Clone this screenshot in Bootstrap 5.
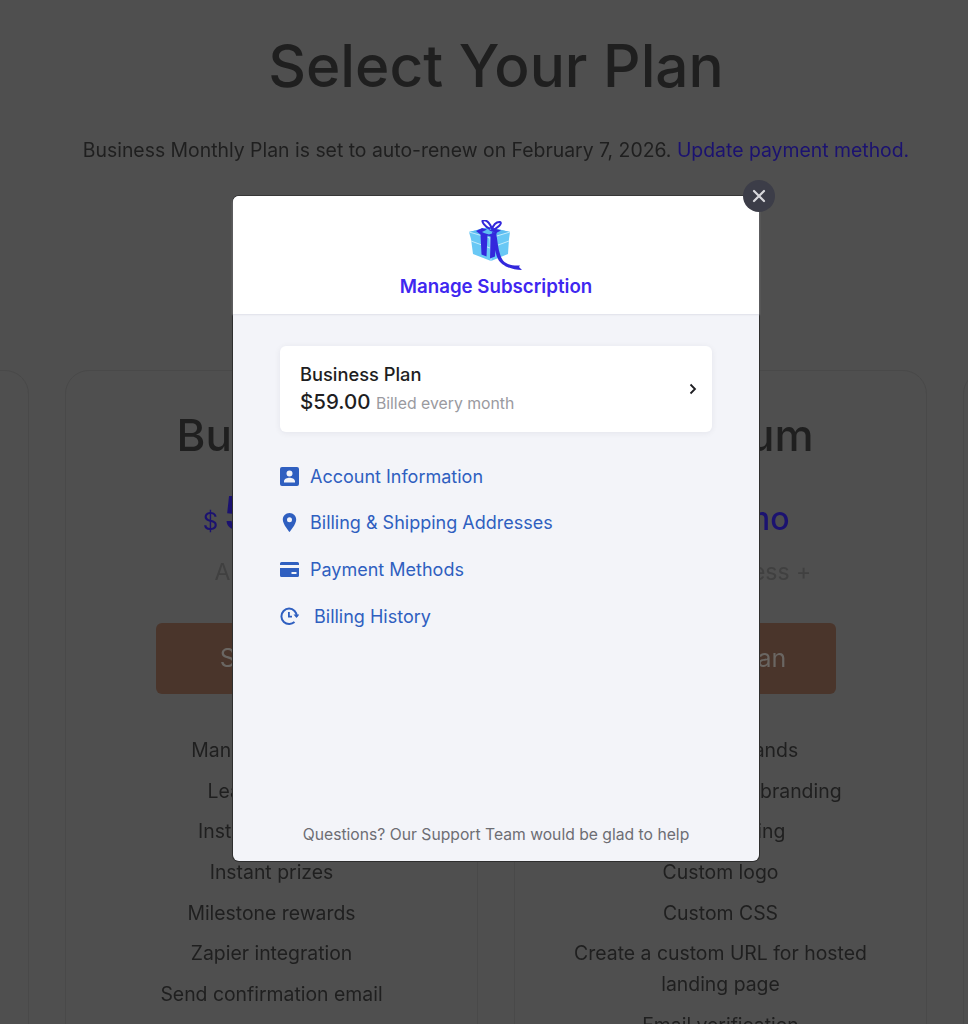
<!DOCTYPE html>
<html lang="en">
<head>
  <meta charset="UTF-8">
  <meta name="viewport" content="width=device-width, initial-scale=1.0">
  <title>Manage Subscription</title>
  <link href="https://cdn.jsdelivr.net/npm/bootstrap@5.3.0/dist/css/bootstrap.min.css" rel="stylesheet">
  <style>
    html, body { height: 100%; overflow: hidden; }
    body { background: #4f4f4f; font-family: Inter, "Liberation Sans", sans-serif; }
    /* page behind the dialog */
    .plans-page { width: 992px; height: 1024px; overflow: hidden; color: #1f1f1f; filter: blur(.5px); }
    .plans-title { font-size: 58.500px; font-weight: 500; line-height: 66px; padding-top: 33px; margin: 0; }
    .renew-line { font-size: 19.400px; line-height: 28px; margin: 37px 0 0; }
    .renew-line a { color: #1b1270; text-decoration: none; }
    .plan-row { margin-top: 206px; margin-left: -384px; gap: 36px; width: 1750px; }
    .plan-box { width: 413px; flex: none; height: 800px; border: 1px solid #494949; border-radius: 24px; padding-top: 36px; }
    .plan-name { font-size: 44px; font-weight: 500; line-height: 56px; margin: 0; }
    .plan-price { font-size: 32px; font-weight: 500; height: 40px; line-height: 40px; color: #1b1270; margin-top: 27px; }
    .plan-price .price-cur { font-size: 24px; font-weight: 400; margin-right: 5px; }
    .plan-price .price-num { font-size: 46px; line-height: 1; }
    .plan-sub { font-size: 23px; line-height: 32px; color: #404040; margin-top: 26px; }
    .plan-btn { display: block; width: 231px; height: 71px; line-height: 71px; margin: 35px auto 0; padding: 0; background: #4a352b; border: 0; border-radius: 6px; color: #6a6662; font-size: 25px; }
    .plan-feats { margin: 41px 50px 0; padding: 0; list-style: none; font-size: 19.400px; line-height: 31px; }
    .plan-feats li { margin-bottom: 9.700px; }
    /* dialog */
    .sub-dialog { position: absolute; left: 233px; top: 196px; width: 526px; height: 665px; background: #f3f4f9; border-radius: 6px; box-shadow: 0 0 0 1px #2e2e2e; }
    .sub-head { height: 118px; background: #fff; border-radius: 6px 6px 0 0; box-shadow: 0 1px 2px #dfe0e8; padding-top: 24px; }
    .sub-title { font-size: 18.700px; font-weight: 600; line-height: 24px; color: #3f27f0; margin: 3px 0 0; }
    .sub-close { position: absolute; left: 510px; top: -16px; width: 32px; height: 32px; padding: 0; border: 0; border-radius: 50%; background: #3c3d48; line-height: 0; }
    .plan-summary { height: 86px; margin: 32px 47px 0; padding: 2px 14px 0 20px; border-radius: 6px; background: #fff; box-shadow: 0 1px 6px rgba(30,30,60,.07); color: #1e1e22; }
    .summary-name { font-size: 18.300px; font-weight: 500; line-height: 25px; }
    .summary-price { font-size: 20.500px; font-weight: 500; line-height: 30px; }
    .summary-bill { font-size: 15.800px; font-weight: 400; color: #9a9a9f; }
    .summary-arrow { margin-top: -3px; }
    .sub-links { margin: 0 47px; padding: 21px 0 0; list-style: none; }
    .sub-links a { display: flex; align-items: center; height: 46.500px; color: #2f5fc0; font-size: 18px; text-decoration: none; gap: 11px; }
    .sub-links svg { flex: none; }
    .sub-links li:last-child { margin-top: 1px; }
    .sub-foot { position: absolute; left: 0; right: 0; bottom: 16px; font-size: 15.700px; line-height: 20px; color: #6d6d73; margin: 0; }
  </style>
</head>
<body>
<div class="plans-page text-center">
  <h1 class="plans-title">Select Your Plan</h1>
  <p class="renew-line">Business Monthly Plan is set to auto-renew on February 7, 2026. <a href="#">Update payment method.</a></p>
  <div class="plan-row d-flex">
    <div class="plan-box"></div>
    <div class="plan-box">
      <h2 class="plan-name">Business</h2>
      <div class="plan-price"><span class="price-cur">$</span><span class="price-num">59</span>/mo</div>
      <div class="plan-sub">All Basic +</div>
      <button class="plan-btn" type="button">Selected</button>
      <ul class="plan-feats">
        <li>Manage 3 brands</li>
        <li>Leaderboards</li>
        <li>Instant coupons</li>
        <li>Instant prizes</li>
        <li>Milestone rewards</li>
        <li>Zapier integration</li>
        <li>Send confirmation email</li>
      </ul>
    </div>
    <div class="plan-box">
      <h2 class="plan-name">Premium</h2>
      <div class="plan-price"><span class="price-cur">$</span><span class="price-num">99</span>/mo</div>
      <div class="plan-sub">All of Business +</div>
      <button class="plan-btn" type="button">Select Plan</button>
      <ul class="plan-feats">
        <li>Unlimited brands</li>
        <li>Remove platform branding</li>
        <li>White labeling</li>
        <li>Custom logo</li>
        <li>Custom CSS</li>
        <li>Create a custom URL for hosted landing page</li>
        <li>Email verification</li>
      </ul>
    </div>
    <div class="plan-box"></div>
  </div>
</div>

<div class="sub-dialog">
  <button class="sub-close" type="button" aria-label="Close">
    <svg width="14" height="14" viewBox="0 0 14 14"><path d="M2 2l10 10M12 2L2 12" stroke="#d8d8dc" stroke-width="2.2" stroke-linecap="round"/></svg>
  </button>
  <div class="sub-head text-center">
    <svg width="56" height="52" viewBox="0 0 56 52" class="d-block mx-auto">
      <path d="M1 12l20-5 21 5-1 7-1 15-17 7-18-7-2-15z" fill="#69c8f5"/>
      <path d="M1 12l21 6 20-6-21-5z" fill="#5cbcf0"/>
      <path d="M3 21l19 7 19-7M22 18l1 23M1 12l21 6 20-6" fill="none" stroke="#c4ecfc" stroke-width="1"/>
      <path d="M8 11l6-3 5 1.500-5 2.500 2 1 5 1.500 6-2-6-2 5-2 7 2-4 2-1 2-1 22-5 2 .5-22-3-1-1 21-5-2-1-20z" fill="#3328dc"/>
      <path d="M22 9C17 7 13 1 15 0.500c4-1 8 4 9 9 1-4 4-8 8-7.500 3 1-3 7-8 8" fill="none" stroke="#3328dc" stroke-width="2"/>
      <path d="M24 12c2 9 2 19 6 27 3 6 12 11 24 11l-3-3 1-1.500c-6 .5-13-.5-17-5-5-7-5-18-7-28z" fill="#3328dc"/>
    </svg>
    <h2 class="sub-title">Manage Subscription</h2>
  </div>
  <a class="plan-summary d-flex align-items-center justify-content-between text-decoration-none" href="#">
    <div>
      <div class="summary-name">Business Plan</div>
      <div class="summary-price">$59.00 <span class="summary-bill">Billed every month</span></div>
    </div>
    <svg class="summary-arrow" width="10" height="12" viewBox="0 0 10 12"><path d="M2.500 1.500L7 6l-4.500 4.500" fill="none" stroke="#1e1e22" stroke-width="1.800"/></svg>
  </a>
  <ul class="sub-links">
    <li><a href="#">
      <svg width="19" height="19" viewBox="0 0 19 19"><path fill-rule="evenodd" d="M2 0h15a2 2 0 012 2v15a2 2 0 01-2 2H2a2 2 0 01-2-2V2a2 2 0 012-2zm7.500 3.500a3 3 0 100 6 3 3 0 000-6zM4 15.500h11v-1.200c0-2.400-3.500-3.500-5.500-3.500S4 11.900 4 14.300z" fill="#2f5fc0"/></svg>
      Account Information</a></li>
    <li><a href="#">
      <svg width="19" height="19" viewBox="0 0 19 19"><path fill-rule="evenodd" d="M9.500 0C5.600 0 2.800 3 2.800 6.700c0 4.600 6.700 12.300 6.700 12.300s6.700-7.700 6.700-12.300C16.200 3 13.400 0 9.500 0zm0 4.200a2.500 2.500 0 110 5 2.500 2.500 0 010-5z" fill="#2f5fc0"/></svg>
      Billing &amp; Shipping Addresses</a></li>
    <li><a href="#">
      <svg width="19" height="15" viewBox="0 0 19 15"><path fill-rule="evenodd" d="M1.500 0h16A1.500 1.500 0 0119 1.500V3H0V1.500A1.500 1.500 0 011.500 0zM0 6h19v7.500a1.500 1.500 0 01-1.500 1.500h-16A1.500 1.500 0 010 13.500zm11.500 4v2h5v-2z" fill="#2f5fc0"/></svg>
      Payment Methods</a></li>
    <li><a href="#">
      <svg width="19" height="19" viewBox="0 0 19 19"><path d="M16.800 9.500A7.700 7.700 0 109.500 17c2 0 3.600-.7 5-1.900" fill="none" stroke="#2f5fc0" stroke-width="2"/><path d="M13.500 7.500h6l-3 3.500zM8 5v5.500h4V8.800H9.800V5z" fill="#2f5fc0"/></svg>
      <span class="ms-1">Billing History</span></a></li>
  </ul>
  <p class="sub-foot text-center">Questions? Our Support Team would be glad to help</p>
</div>
<script src="https://cdn.jsdelivr.net/npm/bootstrap@5.3.0/dist/js/bootstrap.bundle.min.js"></script>
</body>
</html>
